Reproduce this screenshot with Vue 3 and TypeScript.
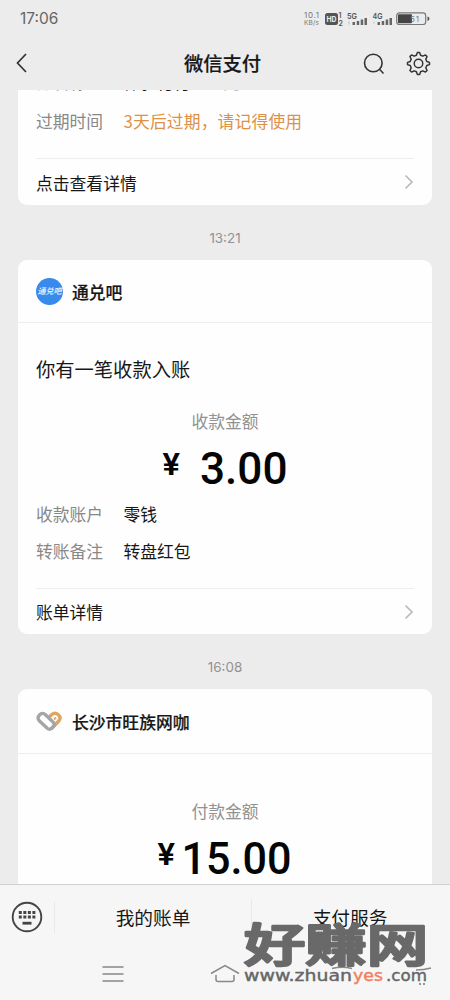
<script setup lang="ts">
interface Row {
  label: string
  value: string
  accent?: boolean
}

const couponRows: Row[] = [
  { label: '券名称', value: '体验付付1.00元' },
  { label: '过期时间', value: '3天后过期，请记得使用', accent: true },
]

const incomeRows: Row[] = [
  { label: '收款账户', value: '零钱' },
  { label: '转账备注', value: '转盘红包' },
]

const gearPath = (() => {
  const points: string[] = []
  const teeth = 8
  for (let i = 0; i < teeth; i++) {
    const base = (i * 360) / teeth - 90
    const steps: [number, number][] = [[-14, 8.2], [-6, 10.6], [6, 10.6], [14, 8.2]]
    for (const [offset, radius] of steps) {
      const angle = ((base + offset) * Math.PI) / 180
      points.push(`${(12 + radius * Math.cos(angle)).toFixed(2)} ${(12 + radius * Math.sin(angle)).toFixed(2)}`)
    }
  }
  return `M${points.join('L')}Z`
})()
</script>

<template>
  <div class="screen">
    <header class="status">
      <span class="clock">17:06</span>
      <svg class="indicators" width="130" height="20" viewBox="0 0 130 20">
        <g fill="#777" font-size="8">
          <text x="4" y="8" textLength="15">10.1</text>
          <text x="4" y="14.5" font-size="6.5" textLength="15">KB/s</text>
        </g>
        <rect x="25" y="3" width="13" height="12" rx="2.5" fill="#555" />
        <text x="26.5" y="12" font-size="8" font-weight="700" fill="#ececec" textLength="10" lengthAdjust="spacingAndGlyphs">HD</text>
        <g fill="#555" font-weight="600">
          <text x="38.5" y="8" font-size="7">1</text>
          <text x="38.5" y="15.5" font-size="7">2</text>
          <text x="47" y="8.5" font-size="8" textLength="10" lengthAdjust="spacingAndGlyphs">5G</text>
          <text x="72.5" y="8.5" font-size="8" textLength="10" lengthAdjust="spacingAndGlyphs">4G</text>
        </g>
        <g fill="#666">
          <path d="M52.5 12h2.5v3h-2.5zM56.700 11h2.500v4h-2.500zM60.700 9.500h2.500v5.500h-2.500zM64.500 8h2.500v7h-2.500z" />
          <path d="M77.500 12h2.500v3h-2.500zM81.700 11h2.500v4h-2.500zM85.700 9.500h2.500v5.500h-2.500zM89.500 8h2.500v7h-2.500z" />
        </g>
        <path d="M49 11.500v3M74 11.500v2" stroke="#bbb" />
        <rect x="96.700" y="2.900" width="29" height="11.600" rx="2.800" fill="none" stroke="#777" stroke-width="1.200" />
        <rect x="98" y="4.200" width="14" height="9" rx="1" fill="#444" />
        <path d="M127.500 6.500q2 .2 2 2.200t-2 2.200z" fill="#555" />
        <text x="110" y="11.600" font-size="8" fill="#777" textLength="9">51</text>
      </svg>
    </header>

    <nav class="titlebar">
      <svg class="back" width="14" height="22" viewBox="0 0 14 22">
        <path d="M11 2 2.500 11 11 20" fill="none" stroke="#333" stroke-width="1.700" />
      </svg>
      <h1>微信支付</h1>
      <div class="actions">
        <svg width="24" height="24" viewBox="0 0 24 24" fill="none" stroke="#333" stroke-width="1.600">
          <circle cx="11.300" cy="11" r="8.800" />
          <path d="m17.500 17.300 4 4.200" />
        </svg>
        <svg width="25" height="25" viewBox="0 0 24 24" fill="none" stroke="#333" stroke-width="1.400" stroke-linejoin="round">
          <path :d="gearPath" />
          <circle cx="12" cy="12" r="4.100" />
        </svg>
      </div>
    </nav>

    <main class="chat">
      <section class="card coupon">
        <div class="rows">
          <div v-for="row in couponRows" :key="row.label" class="row">
            <span class="label">{{ row.label }}</span>
            <span :class="{ accent: row.accent }">{{ row.value }}</span>
          </div>
        </div>
        <div class="footer">
          <span>点击查看详情</span>
          <svg width="10" height="16" viewBox="0 0 10 16"><path d="m1.500 1.500 6.500 6.500-6.500 6.500" /></svg>
        </div>
      </section>

      <time class="stamp">13:21</time>

      <section class="card income">
        <div class="merchant">
          <span class="avatar">通兑吧</span>
          <span class="name">通兑吧</span>
        </div>
        <h2>你有一笔收款入账</h2>
        <p class="caption">收款金额</p>
        <svg class="amount" width="414" height="56" viewBox="0 0 414 56">
          <text class="yen" x="144.500" y="39.500" textLength="17.500" lengthAdjust="spacingAndGlyphs">¥</text>
          <text x="182" y="49" textLength="87.500" lengthAdjust="spacingAndGlyphs">3.00</text>
        </svg>
        <div class="rows">
          <div v-for="row in incomeRows" :key="row.label" class="row">
            <span class="label">{{ row.label }}</span>
            <span>{{ row.value }}</span>
          </div>
        </div>
        <div class="footer">
          <span>账单详情</span>
          <svg width="10" height="16" viewBox="0 0 10 16"><path d="m1.500 1.500 6.500 6.500-6.500 6.500" /></svg>
        </div>
      </section>

      <time class="stamp">16:08</time>

      <section class="card payment">
        <div class="merchant">
          <svg class="heart" width="27" height="22" viewBox="0 0 27 22" fill="none" stroke-width="3.400">
            <path d="M12.500 6.500 15.500 3.700Q19 .8 22.300 3.700T22.800 10L15 18" stroke="#dfa564" />
            <path d="M18 8.500 20 6.500" stroke="#dfa564" stroke-width="2" />
            <path d="M9.500 3.800Q6.500.8 3.500 4T3.500 10L11.500 17.500Q13.500 19 15.500 17.500L18 15Q18.500 13 17.500 11.500Z" stroke="#a5a5a8" />
          </svg>
          <span class="name">长沙市旺族网咖</span>
        </div>
        <p class="caption">付款金额</p>
        <svg class="amount" width="414" height="56" viewBox="0 0 414 56">
          <text class="yen" x="139.500" y="39.500" textLength="17.500" lengthAdjust="spacingAndGlyphs">¥</text>
          <text x="163.500" y="49" textLength="110" lengthAdjust="spacingAndGlyphs">15.00</text>
        </svg>
      </section>
    </main>

    <footer class="dock">
      <div class="menu">
        <div class="keyboard">
          <svg width="32" height="32" viewBox="0 0 32 32">
            <circle cx="16" cy="16" r="14.300" fill="none" stroke="#444" stroke-width="1.900" />
            <path d="M7.800 11.500h16.600M7.800 16h16.600" stroke="#444" stroke-width="3" stroke-dasharray="3 1.530" />
            <path d="M11.500 22.200h9" stroke="#444" stroke-width="2.800" />
          </svg>
        </div>
        <div class="item">我的账单</div>
        <div class="item last">支付服务</div>
      </div>
      <div class="system">
        <svg width="22" height="18" viewBox="0 0 22 18"><path d="M.5 2h21M.5 9h21M.5 16h21" /></svg>
        <svg class="home" width="30" height="22" viewBox="0 0 30 22"><path d="M1 10.500 15 2.500 29 10.500M6 12v4.500q0 2 2 2h14q2 0 2-2V12" /></svg>
        <svg class="undo" width="22" height="8" viewBox="0 0 22 8"><path d="M1 4.500Q11 2 21 4.500" /></svg>
        <svg class="hide" width="17" height="8" viewBox="0 0 17 8"><path d="M1 5Q9 5 16 3" /></svg>
      </div>
    </footer>

    <svg class="watermark" width="206" height="72" viewBox="0 0 206 72">
      <g class="brand">
        <text x="1" y="42" textLength="184" lengthAdjust="spacingAndGlyphs">好赚网</text>
      </g>
      <g class="site">
        <text x="1" y="61" textLength="108" lengthAdjust="spacingAndGlyphs">www.zhuan</text>
        <text x="110" y="61" class="hot" textLength="30" lengthAdjust="spacingAndGlyphs">yes</text>
        <text x="143" y="61" textLength="41" lengthAdjust="spacingAndGlyphs">.com</text>
      </g>
      <path d="M176 64h2m2 0h2" stroke="#777" stroke-width="1.500" />
    </svg>
  </div>
</template>

<style>
body {
  margin: 0;
}
</style>

<style scoped>
.screen {
  position: relative;
  display: flex;
  flex-direction: column;
  width: 450px;
  height: 1000px;
  overflow: hidden;
  background: #ececec;
  color: #171717;
  font-family: "Noto Sans CJK SC", sans-serif;
  font-size: 16.800px;
}

h1,
h2,
p {
  margin: 0;
}

svg {
  flex: none;
  display: block;
}

.status {
  display: flex;
  justify-content: space-between;
  align-items: center;
  height: 37px;
  padding: 0 20px;
  box-sizing: border-box;
  font-family: Inter, sans-serif;
}

.clock {
  font-size: 15.500px;
  color: #666;
}

.indicators {
  margin-top: 2px;
  font-family: Inter, sans-serif;
}

.titlebar {
  display: grid;
  grid-template-columns: 1fr auto 1fr;
  align-items: center;
  height: 53px;
  padding: 0 20px 0 15px;
}

h1 {
  font-size: 19.300px;
  line-height: 28px;
  font-weight: 500;
  margin-top: -2px;
  -webkit-text-stroke: 0.200px currentColor;
}

.back {
  margin-top: -1px;
}

.actions {
  display: flex;
  justify-content: flex-end;
  align-items: center;
  gap: 20px;
  margin-right: -1px;
}

.chat {
  height: 794px;
  padding: 0 18px;
  overflow: hidden;
}

.card {
  border-radius: 9px;
  background: #fefefe;
}

.coupon {
  height: 115px;
  border-radius: 0 0 9px 9px;
  overflow: hidden;
}

.rows {
  padding: 0 18px;
}

.coupon .rows {
  margin-top: -27px;
  height: 95px;
}

.row {
  display: flex;
  height: 37px;
  line-height: 37px;
}

.coupon .row {
  height: 39px;
  line-height: 39px;
}

.label {
  width: 87.500px;
  color: #888;
}

.accent {
  color: #dc9146;
  letter-spacing: 0.150px;
}

.footer {
  display: flex;
  justify-content: space-between;
  align-items: center;
  height: 46px;
  margin: 0 18px;
  border-top: 1px solid #eee;
  line-height: 46px;
}

.footer span {
  padding-top: 1px;
}

.footer path {
  fill: none;
  stroke: #b8b8b8;
  stroke-width: 1.600;
}

.stamp {
  display: block;
  height: 55px;
  line-height: 66px;
  text-align: center;
  font-family: Inter, sans-serif;
  font-size: 13.400px;
  color: #929292;
}

.income {
  height: 374px;
}

.merchant {
  display: flex;
  align-items: center;
  height: 62px;
  padding-left: 18px;
  border-bottom: 1px solid #eee;
  gap: 9px;
  font-weight: 500;
}

.name {
  padding-top: 1px;
  -webkit-text-stroke: 0.200px currentColor;
}

.heart {
  margin-top: 2px;
}

.avatar {
  width: 27px;
  height: 27px;
  border-radius: 50%;
  background: #388bed;
  color: #f4faff;
  font-size: 8px;
  line-height: 26px;
  text-align: center;
  font-style: italic;
}

h2 {
  padding: 29px 18px 0;
  font-size: 19.300px;
  line-height: 34px;
  font-weight: 400;
}

.caption {
  height: 29px;
  margin-top: 20px;
  line-height: 30px;
  text-align: center;
  color: #929292;
}

.amount {
  fill: #050505;
  font-family: Roboto, sans-serif;
  font-size: 45px;
  font-weight: 500;
}

.yen {
  font-size: 31px;
  font-weight: 600;
}

.income .rows {
  height: 97px;
  padding-top: 5px;
  box-sizing: border-box;
}

.income .footer {
  height: 45px;
  line-height: 45px;
}

.payment {
  height: 260px;
}

.payment .merchant {
  height: 64px;
}

.payment .caption {
  margin-top: 42px;
}

.dock {
  height: 116px;
  box-sizing: border-box;
  border-top: 1px solid #d0d0d0;
  background: #f6f6f6;
}

.menu {
  display: flex;
  align-items: center;
  height: 63px;
}

.keyboard {
  width: 43px;
  padding-left: 11px;
  border-right: 1px solid #e9e9e9;
}

.item {
  width: 196px;
  line-height: 36px;
  text-align: center;
  font-size: 18.700px;
  border-right: 1px solid #e9e9e9;
}

.item.last {
  border: 0;
}

.system {
  display: flex;
  align-items: center;
  padding: 15px 0 0 102px;
}

.system path {
  fill: none;
  stroke: #888;
  stroke-width: 1.500;
}

.home {
  margin-left: 86px;
}

.undo {
  margin: -12px 0 0 91px;
}

.hide {
  margin: -10px 0 0 62px;
}

.watermark {
  position: absolute;
  left: 243px;
  top: 920px;
}

.brand {
  font-size: 45px;
  font-weight: 500;
  fill: #696969;
  stroke: #696969;
  stroke-width: 2.600;
  stroke-linejoin: round;
}

.site {
  font-family: "DejaVu Sans", sans-serif;
  font-size: 15px;
  fill: #666;
  stroke: #666;
  stroke-width: 0.400;
}

.site .hot {
  fill: #f17f60;
  stroke: #f17f60;
}
</style>
